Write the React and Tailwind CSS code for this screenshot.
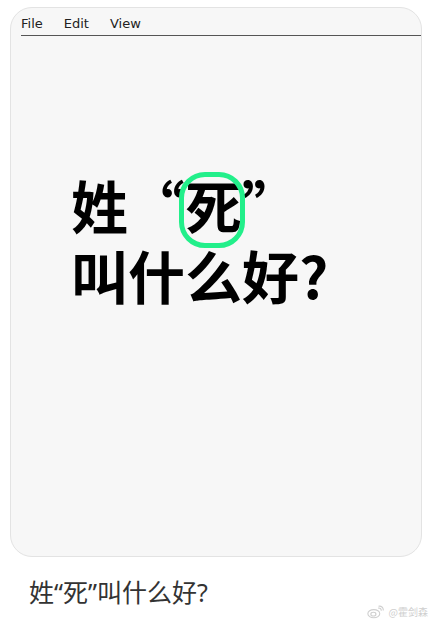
import React from 'react';

const cjk = { fontFamily: '"Noto Sans CJK SC", "Noto Sans", sans-serif' };
const caption = { fontFamily: '"Noto Sans", "Noto Sans CJK SC", sans-serif' };

const WeiboMark = () => (
    <svg viewBox="0 0 20 16" className="w-[17px] h-[14px]" fill="none" stroke="#cfcfcf" strokeWidth="1.3">
        <ellipse cx="8" cy="10" rx="7" ry="4.8" />
        <ellipse cx="7.5" cy="10.5" rx="3" ry="2.2" />
        <path d="M13 3.5c2-.6 4 .8 3.8 3" />
        <path d="M13.5 1.2c3.2-.8 6 1.6 5.6 5" />
    </svg>
);

const App = () => {
    return (
        <div className="relative w-[433px] h-[626px] bg-white overflow-hidden">
            <div className="ml-[10px] mt-[7px] w-[412px] h-[550px] bg-[#f7f7f7] border border-[#e3e3e3] rounded-[22px] flex flex-col">
                {/* menu bar */}
                <div
                    className="flex gap-[21px] pl-[10px] pt-[6px] h-[27px] text-[13px] text-[#222]"
                    style={{ fontFamily: '"DejaVu Sans", sans-serif' }}
                >
                    <span>File</span>
                    <span>Edit</span>
                    <span>View</span>
                </div>
                <div className="ml-[10px] border-t-[1.5px] border-[#555]" />

                {/* big title */}
                <div className="pl-[60px] pt-[133px] text-[57px] leading-[70px] font-bold text-black" style={cjk}>
                    <div>
                        姓“<span className="relative inline-block">
                            死
                            <span className="absolute left-[-6px] right-[-3px] top-[3px] bottom-[-9px] border-[5px] border-[#22ef8a] rounded-[26px]" />
                        </span>”
                    </div>
                    <div>叫什么好?</div>
                </div>
            </div>

            {/* caption */}
            <div className="pl-[29px] pt-[19px] text-[25px] leading-[32px] text-[#333]" style={caption}>
                姓“死”叫什么好?
            </div>

            {/* watermark */}
            <div className="absolute right-[5px] bottom-[7px] flex items-center gap-[5px] text-[10px] text-[#cfcfcf]" style={cjk}>
                <WeiboMark />
                <span>@霍剑森</span>
            </div>
        </div>
    );
};

export default App;
